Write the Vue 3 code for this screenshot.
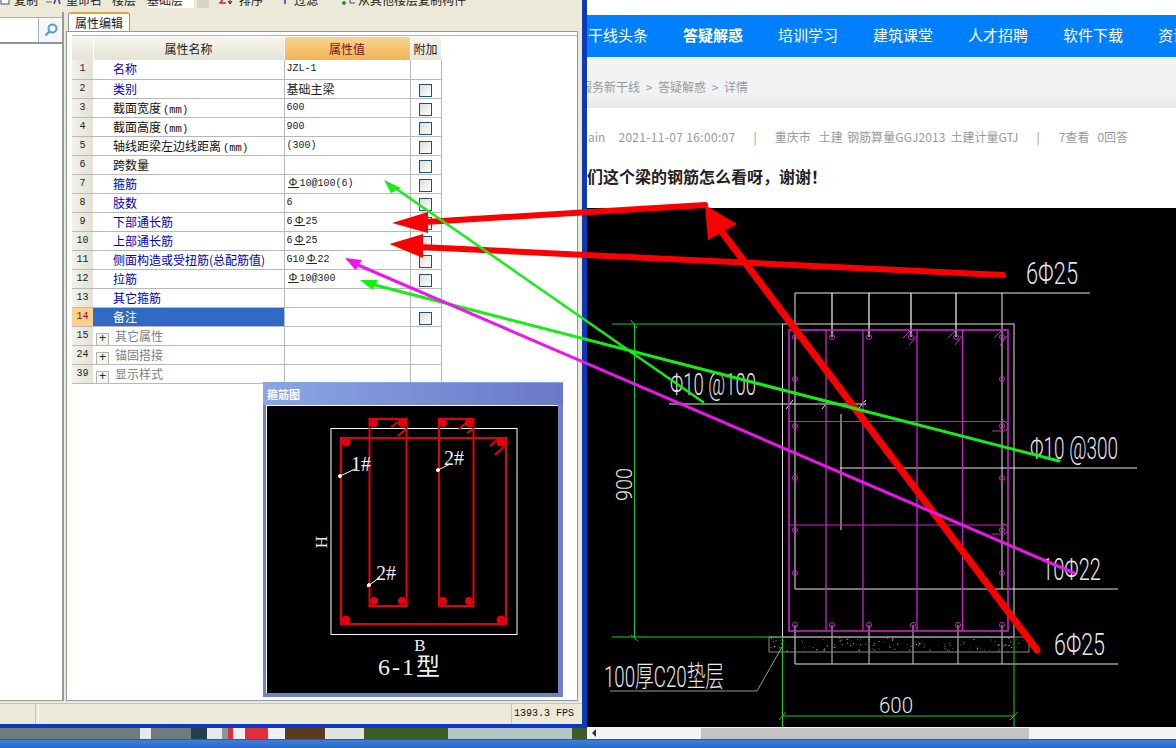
<script setup>
// 属性表数据
const rows = [
  { no: 1, name: '名称', value: 'JZL-1', blue: true, nocheck: true },
  { no: 2, name: '类别', cn: '基础主梁', blue: true },
  { no: 3, name: '截面宽度', unit: '(mm)', value: '600' },
  { no: 4, name: '截面高度', unit: '(mm)', value: '900' },
  { no: 5, name: '轴线距梁左边线距离', unit: '(mm)', value: '(300)' },
  { no: 6, name: '跨数量' },
  { no: 7, name: '箍筋', pre: '', bar: true, value: '10@100(6)', blue: true },
  { no: 8, name: '肢数', value: '6', blue: true },
  { no: 9, name: '下部通长筋', pre: '6', bar: true, value: '25', blue: true },
  { no: 10, name: '上部通长筋', pre: '6', bar: true, value: '25', blue: true },
  { no: 11, name: '侧面构造或受扭筋(总配筋值)', pre: 'G10', bar: true, value: '22', blue: true },
  { no: 12, name: '拉筋', pre: '', bar: true, value: '10@300', blue: true },
  { no: 13, name: '其它箍筋', blue: true, nocheck: true },
  { no: 14, name: '备注', selected: true },
  { no: 15, name: '其它属性', group: true, nocheck: true },
  { no: 24, name: '锚固搭接', group: true, nocheck: true },
  { no: 39, name: '显示样式', group: true, nocheck: true }
]

const navItems = ['干线头条', '答疑解惑', '培训学习', '建筑课堂', '人才招聘', '软件下载', '资讯']

// CAD 图里的钢筋位置
const topBars = [795, 832, 869, 911, 956, 1002]
const bottomBars = [795, 832, 869, 913, 958, 1002]
const sideBars = [379, 426, 478, 530, 573]
const innerLegs = [826, 863, 917, 962.5]

// 垫层的混凝土麻点，用固定种子
let seed = 17
const rnd = () => {
  seed = (seed * 1103 + 12345) % 65536
  return seed / 65536
}
const dots = Array.from({ length: 150 }, () => ({
  x: 768 + rnd() * 256,
  y: 638 + rnd() * 13,
  r: 0.3 + rnd() * 0.4
}))
</script>

<template>
  <div class="screen">
    <div class="desktop">
      <div class="left-col">
        <div class="app-window">
          <div class="toolbar">
            <div class="toolbar-inner">
              <svg class="tb-icon" width="10" height="12" viewBox="0 0 10 12"><rect x="1" y="0" width="8" height="10" fill="#fff" stroke="#33558a"/></svg>
              <span class="tb-text tb-copy">复制</span>
              <svg class="tb-icon tb-gap" width="16" height="12" viewBox="0 0 16 12"><path d="M9 10 12 1 15 10" fill="none" stroke="#2b4f9e" stroke-width="1.6"/><path d="M1 8h6" stroke="#666"/></svg>
              <span class="tb-text">重命名</span>
              <span class="tb-text tb-floor">楼层</span>
              <span class="tb-field">基础层</span>
              <span class="tb-drop"></span>
              <svg class="tb-icon tb-sort" width="15" height="12" viewBox="0 0 15 12"><path d="M1 2h6L1 9h6" fill="none" stroke="#b03030" stroke-width="1.4"/><path d="M11 1v8M9 7l2 3 2-3" fill="none" stroke="#222"/></svg>
              <span class="tb-text">排序</span>
              <svg class="tb-icon tb-filter" width="8" height="12" viewBox="0 0 8 12"><path d="M1 1h6L5 5v5H3V5z" fill="#3a6fc0"/></svg>
              <span class="tb-text">过滤</span>
              <svg class="tb-icon tb-other" width="16" height="12" viewBox="0 0 16 12"><path d="M1 2h6M1 5h6" stroke="#2b4f9e"/><path d="M4 7v4M2 9h4" stroke="#1c9c3a" stroke-width="2"/><path d="M10 1h5M10 5h5M10 9h5M10 1v8" stroke="#2b4f9e"/></svg>
              <span class="tb-text">从其他楼层复制构件</span>
            </div>
          </div>

          <div class="work">
            <div class="tree-pane">
              <div class="search">
                <div class="search-input"></div>
                <div class="search-btn">
                  <svg width="14" height="14" viewBox="0 0 14 14"><circle cx="8.5" cy="5.5" r="4" fill="none" stroke="#5a9ad0" stroke-width="2"/><path d="M5.5 8.5 1.5 12.5" stroke="#5a9ad0" stroke-width="2.4"/></svg>
                </div>
              </div>
              <div class="tree-body"></div>
            </div>

            <div class="prop-pane">
              <div class="tab-strip"><div class="tab">属性编辑</div></div>
              <div class="tab-body">
                <table class="grid">
                  <colgroup>
                    <col class="c-no" /><col class="c-name" /><col class="c-value" /><col class="c-extra" />
                  </colgroup>
                  <thead>
                    <tr>
                      <th class="h-no"></th>
                      <th>属性名称</th>
                      <th class="h-value">属性值</th>
                      <th>附加</th>
                    </tr>
                  </thead>
                  <tbody>
                    <tr v-for="r in rows" :key="r.no">
                      <td class="no" :class="{ 'no-on': r.selected }"><div class="cell">{{ r.no }}</div></td>
                      <td class="name" :class="{ blue: r.blue, sel: r.selected, group: r.group }">
                        <div class="cell"><span v-if="r.group" class="plus">+</span>{{ r.name }}<span v-if="r.unit" class="unit">{{ r.unit }}</span></div>
                      </td>
                      <td class="val">
                        <div class="cell">
                          <span v-if="r.cn" class="cn">{{ r.cn }}</span>
                          <template v-else>{{ r.pre }}<span v-if="r.bar" class="bar">Φ</span>{{ r.value }}</template>
                        </div>
                      </td>
                      <td class="extra"><div class="cell"><span v-if="!r.nocheck" class="check"></span></div></td>
                    </tr>
                  </tbody>
                </table>

                <div class="float-win">
                  <div class="float-title">箍筋图</div>
                  <svg class="stirrup" viewBox="267 405 291 287" width="291" height="287">
                    <rect x="331" y="427.5" width="186" height="206" fill="none" stroke="#fff" />
                    <g fill="none" stroke="#e4000f" stroke-width="2">
                      <rect x="341" y="437" width="165" height="186" />
                      <rect x="369.5" y="418" width="37" height="187" />
                      <rect x="439" y="418" width="34.500" height="187" />
                      <path d="M497 439 490 445M506 444 495 454M398 421 391 426M406 428 398 435M467 421 459 428M473 428 467 432" />
                    </g>
                    <g fill="#e4000f">
                      <circle cx="346" cy="441" r="4.500" /><circle cx="501" cy="441" r="4.500" />
                      <circle cx="346" cy="619" r="4.500" /><circle cx="501" cy="619" r="4.500" />
                      <circle cx="374" cy="422" r="4" /><circle cx="402" cy="422" r="4" />
                      <circle cx="374" cy="600" r="4" /><circle cx="402" cy="600" r="4" />
                      <circle cx="443" cy="422" r="4" /><circle cx="469" cy="422" r="4" />
                      <circle cx="443" cy="600" r="4" /><circle cx="469" cy="600" r="4" />
                    </g>
                    <g stroke="#fff" fill="#fff">
                      <path d="M338 476 355 468M436 470 450 463M367 586 380 576" />
                      <circle cx="340" cy="475" r="1.500" /><circle cx="438" cy="469" r="1.500" /><circle cx="369" cy="584" r="1.500" />
                    </g>
                    <g class="st-text">
                      <text x="351" y="470" font-size="20">1#</text>
                      <text x="444" y="464" font-size="20">2#</text>
                      <text x="376" y="579" font-size="20">2#</text>
                      <text x="420" y="650" font-size="17" text-anchor="middle">B</text>
                      <text transform="translate(327 541) rotate(-90)" font-size="17" text-anchor="middle">H</text>
                      <text x="378" y="674" font-size="24" textLength="62">6-1型</text>
                    </g>
                  </svg>
                </div>
              </div>
            </div>
          </div>

          <div class="status">
            <div class="st-a"></div>
            <div class="st-b"></div>
            <div class="st-fps">1393.3 FPS</div>
          </div>
        </div>
        <div class="wallpaper"></div>
      </div>

      <div class="browser">
        <div class="top-white"></div>
        <nav class="nav">
          <span v-for="(n, i) in navItems" :key="n" class="nav-item" :class="{ active: i === 1 }">{{ n }}</span>
        </nav>
        <div class="crumbs">服务新干线 &gt; 答疑解惑 &gt; 详情</div>
        <div class="meta">
          <span class="m-user">ain</span>
          <span class="m-date">2021-11-07 16:00:07</span>
          <span class="m-sep">|</span>
          <span class="m-city">重庆市</span>
          <span class="m-tag">土建</span>
          <span class="m-tag2">钢筋算量GGJ2013</span>
          <span class="m-tag3">土建计量GTJ</span>
          <span class="m-sep2">|</span>
          <span class="m-count">7查看</span>
          <span class="m-ans">0回答</span>
        </div>
        <div class="question">咱们这个梁的钢筋怎么看呀，谢谢！</div>

        <svg class="drawing" viewBox="587 208 589 519" preserveAspectRatio="none">
          <!-- 标注线 -->
          <g fill="none" stroke="#e8e8e8">
            <path d="M795 293H1090M795 293V589M1002 293V589M795 589H1118M795 625V664M795 664H1118" />
            <path d="M832 293V337M869 293V337M911 293V337M956 293V337" stroke-width="1.300" />
            <path d="M832 625V664M869 625V664M913 625V664M958 625V664M1002 625V664" stroke="#ccc" />
            <path d="M669 404H866M840 468H1137M841 414V530" />
            <path d="M786 409 793 400M822 409 829 400M858 409 866 400" />
          </g>
          <rect x="782.500" y="324" width="231.500" height="313" fill="none" stroke="#ddd" />
          <!-- 箍筋 -->
          <g fill="none" stroke="#cc22cc">
            <rect x="789" y="330" width="219" height="301" stroke-width="1.600" />
            <path v-for="x in innerLegs" :key="x" :d="`M${x} 330V631`" stroke-width="1.300" />
            <path d="M789 421.500H1006M789 525H1006" />
            <path d="M903 338 910 331M909 345 917 336M948 338 955 331M955 345 962 336M994 338 1001 331M1000 345 1007 336" />
            <path d="M992 431H1004A5 5 0 0 0 1002 421M992 534H1004A5 5 0 0 0 1002 524" />
            <circle v-for="x in topBars" :key="'t' + x" :cx="x" cy="337" r="2.500" />
            <circle v-for="x in bottomBars" :key="'b' + x" :cx="x" cy="625" r="2.500" />
            <template v-for="y in sideBars" :key="'s' + y">
              <circle cx="795" :cy="y" r="2.500" />
              <circle cx="1002" :cy="y" r="2.500" />
            </template>
          </g>
          <!-- 尺寸线 -->
          <g fill="none" stroke="#18d018">
            <path d="M612 324H782M634.500 324V637M612 637H782M782.500 637V727M1014 637V727M782 716H1014" />
            <path d="M631 320 637 328M631 635 638 641M779 720 786 712M1010 720 1018 712" />
          </g>
          <!-- 垫层 -->
          <path d="M769 637V652H1029V637M769 637H1029" fill="none" stroke="#888" />
          <circle v-for="(d, i) in dots" :key="i" :cx="d.x" :cy="d.y" :r="d.r" fill="#aaa" />
          <path d="M610 691H757L782 647" fill="none" stroke="#999" />
          <!-- 文字 -->
          <g class="cad-text">
            <text x="1026" y="284" font-size="31" textLength="52" lengthAdjust="spacingAndGlyphs">6Φ25</text>
            <text x="670" y="395" font-size="31" textLength="86" lengthAdjust="spacingAndGlyphs">Φ10 @100</text>
            <text x="1030" y="459" font-size="31" textLength="88" lengthAdjust="spacingAndGlyphs">Φ10 @300</text>
            <text x="1042" y="580" font-size="31" textLength="59" lengthAdjust="spacingAndGlyphs">10Φ22</text>
            <text x="1054" y="655" font-size="31" textLength="51" lengthAdjust="spacingAndGlyphs">6Φ25</text>
            <text x="604" y="687" font-size="29" textLength="120" lengthAdjust="spacingAndGlyphs">100厚C20垫层</text>
            <text x="879" y="713" font-size="22" textLength="34" lengthAdjust="spacingAndGlyphs">600</text>
            <text transform="translate(632 501) rotate(-90)" font-size="22" textLength="33" lengthAdjust="spacingAndGlyphs">900</text>
          </g>
        </svg>

        <div class="hscroll">
          <span class="h-arrow"></span>
          <span class="h-thumb"></span>
        </div>
      </div>
    </div>
    <div class="taskbar"></div>

    <!-- 截图上后画的箭头 -->
    <svg class="marks" viewBox="0 0 1176 748" width="1176" height="748">
      <g fill="none" stroke-linecap="round">
        <path d="M425 222 705 205" stroke="#fb0000" stroke-width="6" />
        <path d="M420 247 1003 275" stroke="#fb0000" stroke-width="6" />
        <path d="M1037 650 722 232" stroke="#fb0000" stroke-width="7" />
        <path d="M398 190 703 402" stroke="#14ee14" stroke-width="2.500" />
        <path d="M375 285 1059 461" stroke="#14ee14" stroke-width="3" />
        <path d="M358 265 1074 573" stroke="#ee14ee" stroke-width="3" />
      </g>
      <polygon points="392,223 428,212 428,233" fill="#fb0000" />
      <polygon points="389.500,244 423,234 423,258" fill="#fb0000" />
      <polygon points="705,205 737,224 708,240" fill="#fb0000" />
      <polygon points="384,180 401,188 391,193" fill="#14ee14" />
      <polygon points="360,280 378,280 372.600,290" fill="#14ee14" />
      <polygon points="345,258 362,260 355.600,270" fill="#ee14ee" />
    </svg>
  </div>
</template>

<style scoped>
.screen {
  position: relative;
  width: 1176px;
  height: 748px;
  overflow: hidden;
  display: flex;
  flex-direction: column;
  font-family: "Noto Sans CJK SC", "Liberation Sans", sans-serif;
  background: #fff;
}

.desktop {
  display: flex;
  height: 739px;
}

.left-col {
  width: 587px;
  flex: none;
  display: flex;
  flex-direction: column;
  position: relative;
  z-index: 1;
}

.app-window {
  height: 728px;
  box-sizing: border-box;
  background: #ece9d8;
  border-right: 5px solid #0a3bb4;
  border-bottom: 4px solid #0a3bc8;
  display: flex;
  flex-direction: column;
}

.toolbar {
  height: 12px;
  flex: none;
  overflow: hidden;
  background: #ece9d8;
}

.toolbar-inner {
  height: 16px;
  margin-top: -8px;
  display: flex;
  align-items: center;
  font-size: 12px;
  color: #222;
  white-space: nowrap;
}

.tb-icon { flex: none; }
.tb-text { line-height: 16px; }
.tb-copy { margin-left: 4px; }
.tb-gap { margin-left: 7px; margin-right: 5px; }
.tb-floor { margin-left: 10px; }
.tb-field {
  width: 47px;
  margin-left: 11px;
  background: #fff;
  line-height: 16px;
}
.tb-drop {
  width: 12px;
  height: 16px;
  margin-left: 3px;
  background: #d8d5c6;
}
.tb-sort { margin-left: 10px; margin-right: 5px; }
.tb-filter { margin-left: 18px; margin-right: 5px; }
.tb-other { margin-left: 22px; margin-right: 2px; }

.work {
  flex: 1;
  min-height: 0;
  display: flex;
}

.tree-pane {
  width: 62px;
  flex: none;
  padding-top: 5px;
  margin-bottom: 2px;
  border-right: 2px solid #9a9a92;
  border-bottom: 1px solid #9a9a92;
  box-sizing: content-box;
  display: flex;
  flex-direction: column;
}

.search {
  height: 24px;
  flex: none;
  display: flex;
  border-top: 1px solid #aab0b8;
  border-bottom: 2px solid #8f959c;
}

.search-input {
  width: 38px;
  background: #fff;
  border-right: 1px solid #aab0b8;
}

.search-btn {
  flex: 1;
  background: #f4f7fb;
  display: flex;
  align-items: center;
  justify-content: center;
}

.tree-body {
  flex: 1;
  background: #fff;
}

.prop-pane {
  width: 512px;
  margin-left: 2px;
  margin-bottom: 2px;
  display: flex;
  flex-direction: column;
}

.tab-strip {
  height: 19px;
  flex: none;
  padding-left: 2px;
  background: #ece9d8;
}

.tab {
  width: 62px;
  height: 20px;
  box-sizing: border-box;
  position: relative;
  background: #fff;
  border: 1px solid #8c9aa8;
  border-top: 2px solid #e8a040;
  border-bottom: none;
  border-radius: 3px 3px 0 0;
  font-size: 12px;
  line-height: 17px;
  text-align: center;
  color: #222;
}

.tab-body {
  flex: 1;
  position: relative;
  background: #fff;
  border: 1px solid #8c9aa8;
  padding: 3px 0 0 5px;
}

.tab-body::before {
  content: "";
  display: block;
  height: 1px;
  margin-bottom: 1px;
  background: #a8b4c0;
}

.grid {
  table-layout: fixed;
  width: 369px;
  border-collapse: collapse;
  font-size: 12px;
  color: #111;
}

.c-no { width: 21px; }
.c-name { width: 191px; }
.c-value { width: 126px; }
.c-extra { width: 31px; }

.grid th {
  height: 23px;
  padding: 0;
  font-weight: 400;
  background: linear-gradient(#f6f5ee, #e6e3d6);
  border-right: 1px solid #fff;
  color: #222;
}

.grid .h-value {
  background: linear-gradient(#f8d48e, #f2b454);
  color: #7a1020;
}

.grid td {
  height: 19px;
  padding: 0;
  box-sizing: border-box;
  border-bottom: 1px solid #b8b8b8;
  border-right: 1px solid #b8b8b8;
  white-space: nowrap;
  overflow: hidden;
}

/* 固定行高，避免中文回退字体把行撑高 */
.cell {
  height: 18px;
  line-height: 18px;
  overflow: hidden;
}

.grid .no {
  background: linear-gradient(90deg, #f2f1ea, #e4e2d6);
  border-right: none;
  text-align: center;
  font-family: "Liberation Mono", monospace;
  font-size: 10px;
  color: #222;
}

.grid .no-on {
  background: #fdd08c;
  color: #8a1020;
}

.grid .name {
  padding-left: 20px;
}

.grid .name.blue { color: #0000b8; }
.grid .name.sel {
  background: #316ac5;
  color: #fff;
}
.grid .name.group {
  padding-left: 3px;
  color: #808080;
}

.plus {
  display: inline-block;
  width: 11px;
  height: 11px;
  margin-right: 6px;
  border: 1px solid #b4b4b0;
  background: #f2f2ee;
  color: #222;
  font-family: "Liberation Mono", monospace;
  font-size: 12px;
  line-height: 11px;
  text-align: center;
  vertical-align: -1px;
}

.unit {
  font-family: "Liberation Mono", monospace;
  font-size: 10.5px;
  margin-left: 2px;
}

.grid .val {
  padding-left: 2px;
  font-family: "Liberation Mono", monospace;
  font-size: 10px;
  color: #222;
}

.val .cn {
  font-family: "Noto Sans CJK SC", sans-serif;
  font-size: 12px;
}

.val .bar {
  display: inline-block;
  width: 11px;
  font-family: "Liberation Sans", sans-serif;
  font-size: 11px;
  line-height: 10px;
  text-align: center;
  border-bottom: 1px solid #222;
  margin: 0 1px;
}

.extra { text-align: center; }

.check {
  display: inline-block;
  width: 11px;
  height: 11px;
  border: 1px solid #1c5180;
  background: linear-gradient(135deg, #dcdcd7, #fff);
  vertical-align: middle;
}

.float-win {
  position: absolute;
  left: 196px;
  top: 350px;
  width: 300px;
  height: 315px;
  box-sizing: border-box;
  background: #6f80cc;
  padding: 0 4px 5px;
  border-top: 1px solid #8ea4e0;
  display: flex;
  flex-direction: column;
}

.float-title {
  height: 22px;
  flex: none;
  margin: 0 -4px;
  padding-left: 4px;
  background: linear-gradient(90deg, #8aa6e6, #6a78c8);
  color: #fff;
  font-size: 11px;
  font-weight: 700;
  line-height: 22px;
}

.stirrup {
  display: block;
  background: #000;
  border-top: 1px solid #fff;
  border-left: 1px solid #fff;
  flex: none;
  margin-left: -1px;
}

.st-text {
  fill: #f0f0f0;
  font-family: "Liberation Serif", "Noto Sans CJK SC", serif;
}

.status {
  height: 20px;
  flex: none;
  display: flex;
  background: #ece9d8;
  border-top: 1px solid #c8c5b4;
  font-size: 10px;
}

.st-a {
  width: 35px;
  border-right: 1px solid #c8c5b4;
}

.st-b {
  flex: 1;
  margin-left: 2px;
  border-left: 1px solid #fff;
}

.st-fps {
  width: 71px;
  box-sizing: border-box;
  padding-left: 2px;
  border-left: 1px solid #c8c5b4;
  font-family: "Liberation Mono", monospace;
  line-height: 20px;
  color: #111;
}

.wallpaper {
  flex: 1;
  background: linear-gradient(90deg,
    #6e7d7a 0 140px, #e8e8e8 140px 151px, #6e7d7a 151px 191px, #23404a 191px 207px,
    #e8e8e8 207px 222px, #8a9696 222px 228px, #e0303c 228px 233px, #f0f0f0 233px 245px,
    #e0303c 245px 268px, #f0f0f0 268px 285px, #5a3a20 285px 325px, #dfe5dc 325px 364px,
    #3e5c28 364px 448px, #b4c6c2 448px 572px, #3e5c28 572px 587px);
}

.browser {
  flex: 1;
  min-width: 0;
  display: flex;
  flex-direction: column;
  overflow: hidden;
  background: #fff;
}

.top-white {
  height: 15px;
  flex: none;
}

.nav {
  height: 42px;
  flex: none;
  box-sizing: border-box;
  padding: 0 0 3px 1px;
  display: flex;
  align-items: center;
  gap: 35px;
  background: #0080ff;
  color: #fff;
  font-size: 15px;
  white-space: nowrap;
}

.nav-item { flex: none; }
.nav-item.active { font-weight: 700; }

.crumbs {
  height: 51px;
  flex: none;
  margin-left: -7px;
  background: linear-gradient(#f1f2f4 70%, #e6e7e9);
  color: #999;
  font-size: 12px;
  line-height: 59px;
  word-spacing: 3px;
  white-space: nowrap;
}

.meta {
  height: 58px;
  flex: none;
  box-sizing: border-box;
  padding: 0 0 2px 1px;
  display: flex;
  align-items: center;
  color: #999;
  font-size: 12px;
  white-space: nowrap;
}

.m-date { margin-left: 13px; letter-spacing: 0.33px; }
.m-sep { margin-left: 18px; }
.m-city { margin-left: 18px; }
.m-tag { margin-left: 8px; }
.m-tag2 { margin-left: 4px; letter-spacing: 0.1px; }
.m-tag3 { margin-left: 5px; }
.m-sep2 { margin-left: 18px; }
.m-count { margin-left: 19px; }
.m-ans { margin-left: 8px; }

.question {
  height: 42px;
  flex: none;
  margin-left: -16px;
  color: #222;
  font-size: 16px;
  font-weight: 700;
  line-height: 20px;
  white-space: nowrap;
}

.drawing {
  display: block;
  width: 589px;
  height: 519px;
  flex: none;
  background: #000;
}

.cad-text {
  fill: #e6e6e6;
  font-family: "Roboto", "Noto Sans CJK SC", sans-serif;
  font-weight: 300;
}

.hscroll {
  flex: 1;
  display: flex;
  align-items: center;
  background: #f3f3f3;
}

.h-arrow {
  margin-left: 5px;
  border-right: 4px solid #333;
  border-top: 4px solid transparent;
  border-bottom: 4px solid transparent;
}

.h-thumb {
  width: 328px;
  height: 11px;
  margin-left: 105px;
  background: #c4c4c4;
}

.taskbar {
  flex: 1;
  background: linear-gradient(#3d7fdc, #2a68c8);
  border-top: 1px solid #2458b8;
}

.marks {
  position: absolute;
  left: 0;
  top: 0;
  z-index: 2;
  pointer-events: none;
}
</style>

<style>
html,
body {
  overflow: hidden;
  background: #fff;
}
</style>
